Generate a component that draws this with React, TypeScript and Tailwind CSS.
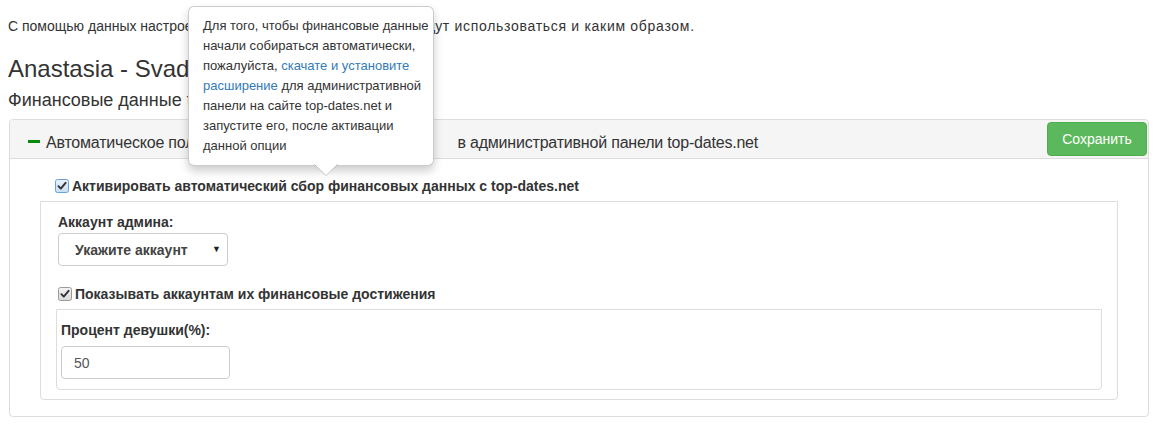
import React from 'react';

const CheckBox: React.FC<{ focused?: boolean }> = ({ focused }) => (
  <svg width="14" height="14" viewBox="0 0 14 14" className="shrink-0">
    <defs>
      <linearGradient id={focused ? 'cbf' : 'cb'} x1="0" y1="0" x2="0" y2="1">
        <stop offset="0" stopColor={focused ? '#eaf3fc' : '#f4f4f4'} />
        <stop offset="1" stopColor={focused ? '#c9def5' : '#d9d9d9'} />
      </linearGradient>
    </defs>
    <rect
      x="0.5"
      y="0.5"
      width="13"
      height="13"
      rx="2"
      fill={`url(#${focused ? 'cbf' : 'cb'})`}
      stroke={focused ? '#6a9fdc' : '#9a9a9a'}
    />
    <path d="M3.4 7.2 L5.8 9.6 L10.6 3.8" fill="none" stroke="#333" strokeWidth="1.9" strokeLinecap="round" strokeLinejoin="round" />
  </svg>
);

export default function App() {
  return (
    <div
      className="relative min-h-[426px] bg-white px-[8px] pt-[16px] text-[14px] leading-[20px] text-[#333]"
      style={{ fontFamily: '"Liberation Sans", Arial, sans-serif' }}
    >
      {/* Intro */}
      <p className="whitespace-nowrap">
        С помощью данных настроек вы можете выбрать, какие поля буд
        <span className="tracking-[0.7px]">ут использоваться и каким образом.</span>
      </p>
      <h3 className="mt-[20px] text-[24px] leading-[26px]">Anastasia - Svadba</h3>
      <h4 className="mt-[8px] text-[18px] leading-[20px]">Финансовые данные top-dates.net</h4>

      {/* Panel */}
      <div className="mt-[9px] ml-[1px] w-[1140px] rounded-[4px] border border-[#ddd] bg-white">
        <div className="flex h-[39px] items-center justify-between rounded-t-[3px] border-b border-[#ddd] bg-[#f5f5f5] pl-[18px] pr-[1px]">
          <div className="flex items-center gap-[6px] pt-[4px]">
            <span className="block h-[3px] w-[12px] bg-[#0a8a0a]" />
            <span className="mt-[4px] whitespace-nowrap text-[16px] leading-[20px] tracking-[-0.2px]">
              Автоматическое получение финансовых данных
              <span className="ml-[58px]">в административной панели top-dates.net</span>
            </span>
          </div>
          <button className="h-[34px] w-[100px] rounded-[4px] border border-[#4cae4c] bg-[#5cb85c] text-[14px] text-white">
            Сохранить
          </button>
        </div>

        <div className="px-[30px] pt-[17px] pb-[16px]">
          <label className="flex items-center gap-[3px] pl-[15px] font-bold">
            <CheckBox focused />
            <span>Активировать автоматический сбор финансовых данных с top-dates.net</span>
          </label>

          <div className="mt-[5px] rounded-b-[4px] border border-[#ddd] px-[15px] pt-[10px] pb-[9px]">
            <div className="pl-[2px] font-bold">Аккаунт админа:</div>
            <div className="mt-[1px] ml-[2px] flex h-[33px] w-[170px] items-center justify-between rounded-[4px] border border-[#ccc] bg-white pl-[16px] pr-[6px] font-bold text-[#444]">
              <span>Укажите аккаунт</span>
              <span className="text-[9px] leading-none text-[#222]">▼</span>
            </div>

            <label className="mt-[18px] flex items-center gap-[3px] pl-[2px] font-bold">
              <CheckBox />
              <span>Показывать аккаунтам их финансовые достижения</span>
            </label>

            <div className="mt-[5px] rounded-b-[4px] border border-[#ddd] px-[4px] pt-[10px] pb-[10px]">
              <div className="font-bold">Процент девушки(%):</div>
              <div className="mt-[6px] flex h-[33px] w-[169px] items-center rounded-[4px] border border-[#ccc] bg-white pl-[12px] text-[#555]">
                50
              </div>
            </div>
          </div>
        </div>
      </div>

      {/* Popover */}
      <div className="absolute left-[188px] top-[6px] w-[246px] rounded-[6px] border border-[rgba(0,0,0,0.2)] bg-white px-[14px] py-[9px] text-[13px] leading-[20px] shadow-[0_5px_10px_rgba(0,0,0,0.2)]">
        <div className="whitespace-nowrap">Для того, чтобы финансовые данные</div>
        <div className="whitespace-nowrap">начали собираться автоматически,</div>
        <div className="whitespace-nowrap">
          пожалуйста, <span className="text-[#337ab7]">скачате и установите</span>
        </div>
        <div className="whitespace-nowrap">
          <span className="text-[#337ab7]">расширение</span> для административной
        </div>
        <div className="whitespace-nowrap">панели на сайте top-dates.net и</div>
        <div className="whitespace-nowrap">запустите его, после активации</div>
        <div className="whitespace-nowrap">данной опции</div>
        <svg width="24" height="12" viewBox="0 0 24 12" className="absolute left-[125px] top-full -mt-[1px]">
          <path d="M0 0 L12 11.5 L24 0" fill="white" stroke="rgba(0,0,0,0.2)" strokeWidth="1" />
          <rect x="0" y="-1" width="24" height="1.2" fill="white" />
        </svg>
      </div>
    </div>
  );
}
